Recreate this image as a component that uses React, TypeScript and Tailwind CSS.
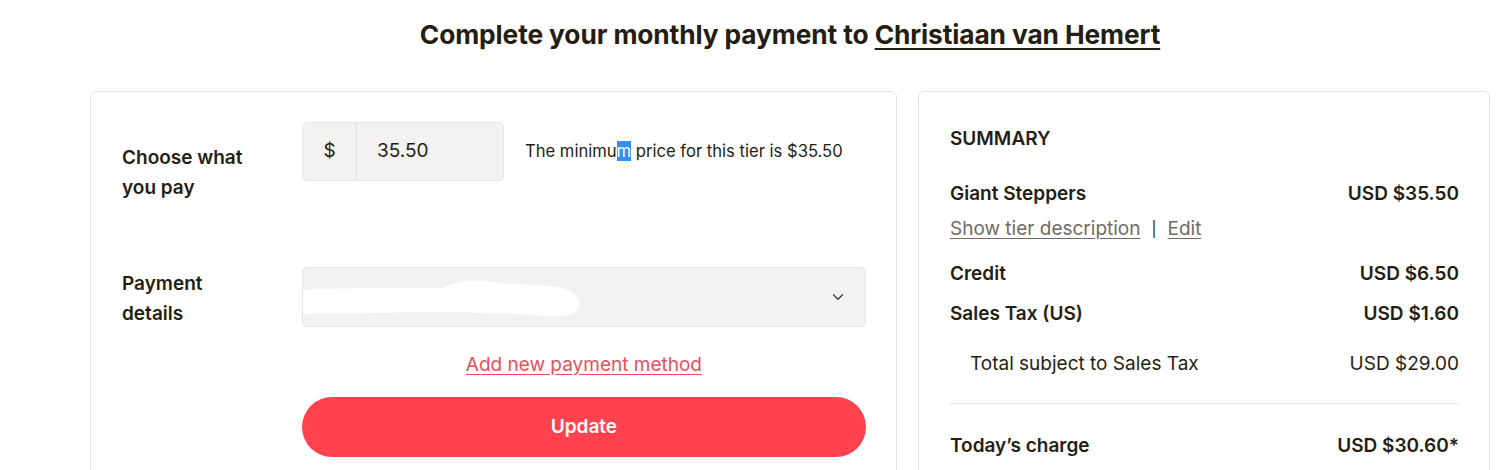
import { ChevronDown } from 'lucide-react'

const font = { fontFamily: 'Inter, "Noto Sans", sans-serif' }

function SummaryRow({ label, value, bold = true, indent = false }: { label: string; value: string; bold?: boolean; indent?: boolean }) {
  return (
    <div className={`flex items-center justify-between h-[30px] text-[19px] ${bold ? 'font-semibold' : 'font-normal'} ${indent ? 'pl-5' : ''}`}>
      <span>{label}</span>
      <span>{value}</span>
    </div>
  )
}

export default function App() {
  return (
    <div className="min-h-screen bg-white text-[#241e12]" style={font}>
      <div className="ml-[90px] w-[1400px]">
        <h1 className="pt-[15px] h-[91px] text-center text-[26.3px] font-bold tracking-[-0.1px]">
          Complete your monthly payment to <span className="underline underline-offset-4 decoration-2">Christiaan van Hemert</span>
        </h1>

        <div className="flex gap-[21px] items-start">
          {/* left card */}
          <div className="w-[807px] h-[400px] border border-[#e5e3dd] rounded-[6px] pl-[31px] pr-[30px] pt-[30px]">
            <div className="flex items-start">
              <div className="w-[180px] pt-[21px] text-[19px] font-semibold leading-[30px]">
                Choose what<br />you pay
              </div>
              <div className="flex items-center">
                <div className="flex h-[59px] w-[202px] rounded-[5px] border border-[#e8e6e1] bg-[#f3f2f0] text-[19px]">
                  <div className="w-[54px] flex items-center justify-center border-r border-[#e1dfda]">$</div>
                  <div className="flex items-center pl-5">35.50</div>
                </div>
                <div className="ml-[21px] text-[16.6px] text-[#241e12]">
                  The minimu<span className="bg-[#3390f0] text-white">m</span> price for this tier is $35.50
                </div>
              </div>
            </div>

            <div className="flex mt-[64px]">
              <div className="w-[180px] pt-[2px] text-[19px] font-semibold leading-[30px]">
                Payment<br />details
              </div>
              <div className="w-[565px]">
                <div className="relative h-[60px] rounded-[5px] border border-[#e8e6e1] bg-[#f3f2f0] flex items-center justify-end pr-[20px]">
                  <svg className="absolute left-0 top-[10px]" width="280" height="42" viewBox="0 0 280 42">
                    <path
                      d="M0 12 C40 9 90 11 140 10 C150 4 175 0 190 4 C210 7 230 6 255 9 C272 12 278 20 276 28 C273 36 262 40 240 38 C215 35 190 36 160 34 C120 33 60 36 0 36 Z"
                      fill="#ffffff"
                    />
                  </svg>
                  <ChevronDown size={18} strokeWidth={1.6} className="text-[#333] translate-x-[2px]" />
                </div>
                <div className="mt-[24px] h-[24px] text-center text-[19px] text-[#e5505a] underline underline-offset-[3px]">
                  Add new payment method
                </div>
                <button className="mt-[22px] w-full h-[60px] rounded-full bg-[#ff424d] text-white text-[19px] font-semibold">
                  Update
                </button>
              </div>
            </div>
          </div>

          {/* right card */}
          <div className="w-[572px] h-[400px] border border-[#e5e3dd] rounded-[6px] pl-[31px] pr-[30px] pt-[32px]">
            <div className="text-[19px] font-semibold h-[30px] flex items-center">SUMMARY</div>
            <div className="mt-[25px]">
              <SummaryRow label="Giant Steppers" value="USD $35.50" />
            </div>
            <div className="h-[30px] mt-[5px] flex items-center text-[19px] text-[#6f6b66]">
              <span className="underline underline-offset-[3px]">Show tier description</span>
              <span className="mx-[11px] text-[#241e12] text-[15px]">|</span>
              <span className="underline underline-offset-[3px]">Edit</span>
            </div>
            <div className="mt-[15px]">
              <SummaryRow label="Credit" value="USD $6.50" />
            </div>
            <div className="mt-[10px]">
              <SummaryRow label="Sales Tax (US)" value="USD $1.60" />
            </div>
            <div className="mt-[20px]">
              <SummaryRow label="Total subject to Sales Tax" value="USD $29.00" bold={false} indent />
            </div>
            <div className="mt-[24px] border-t border-[#e5e3dd]" />
            <div className="mt-[27px]">
              <SummaryRow label="Today’s charge" value="USD $30.60*" />
            </div>
          </div>
        </div>
      </div>
    </div>
  )
}
